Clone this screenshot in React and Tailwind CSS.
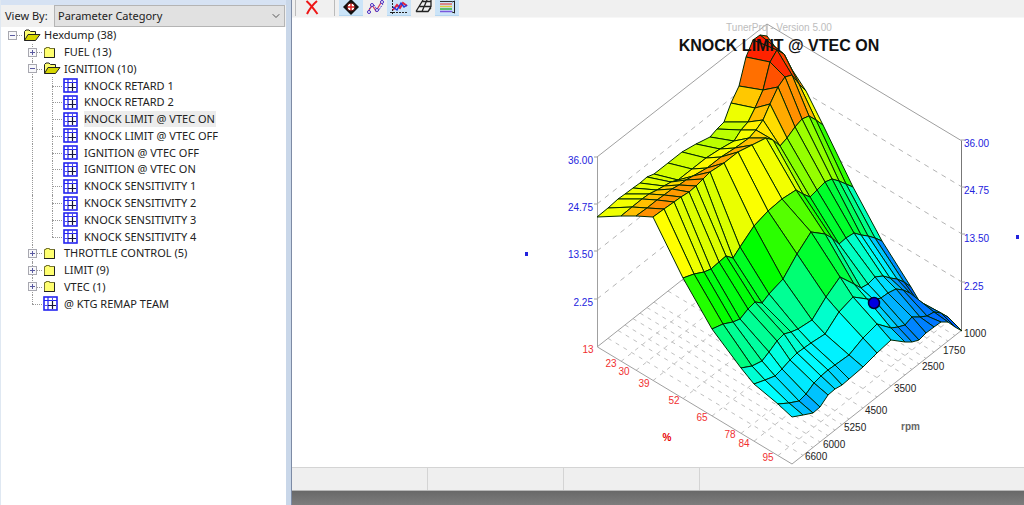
import React, { useState } from 'react';
import { ChevronDown } from 'lucide-react';

const tree = [
  { label: 'Hexdump (38)', level: 0, icon: 'open', expander: '-' },
  { label: 'FUEL (13)', level: 1, icon: 'folder', expander: '+' },
  { label: 'IGNITION (10)', level: 1, icon: 'open', expander: '-' },
  { label: 'KNOCK RETARD 1', level: 2, icon: 'table' },
  { label: 'KNOCK RETARD 2', level: 2, icon: 'table' },
  { label: 'KNOCK LIMIT @ VTEC ON', level: 2, icon: 'table' },
  { label: 'KNOCK LIMIT @ VTEC OFF', level: 2, icon: 'table' },
  { label: 'IGNITION @ VTEC OFF', level: 2, icon: 'table' },
  { label: 'IGNITION @ VTEC ON', level: 2, icon: 'table' },
  { label: 'KNOCK SENSITIVITY 1', level: 2, icon: 'table' },
  { label: 'KNOCK SENSITIVITY 2', level: 2, icon: 'table' },
  { label: 'KNOCK SENSITIVITY 3', level: 2, icon: 'table' },
  { label: 'KNOCK SENSITIVITY 4', level: 2, icon: 'table', last: true },
  { label: 'THROTTLE CONTROL (5)', level: 1, icon: 'folder', expander: '+' },
  { label: 'LIMIT (9)', level: 1, icon: 'folder', expander: '+' },
  { label: 'VTEC (1)', level: 1, icon: 'folder', expander: '+' },
  { label: '@ KTG REMAP TEAM', level: 1, icon: 'table', last: true },
];

// Distance along the rpm axis (7000 -> 1000), shared by every load line
const rpmSteps = [0, 11, 21, 28, 36, 43, 50, 57, 71, 85, 99, 113, 120, 127, 134, 142, 149, 156, 163, 170];

// One line per load breakpoint: x where it starts, then the height at each rpm step
const loadLines = [
  { x: 597, y: [217, 208, 199, 194, 188, 183, 177, 174, 163, 152, 144, 137, 129, 122, 103, 86, 57, 40, 35, 36] },
  { x: 621, y: [216, 207, 199, 194, 190, 186, 182, 180, 169, 158, 149, 141, 130, 122, 108, 90, 62, 50, 54, 68] },
  { x: 636, y: [216, 208, 200, 195, 189, 185, 180, 176, 168, 157, 148, 138, 130, 120, 104, 87, 77, 75, 84, 91] },
  { x: 653, y: [217, 209, 202, 197, 192, 186, 179, 172, 163, 152, 145, 138, 140, 146, 138, 127, 119, 116, 120, 125] },
  { x: 683, y: [278, 274, 272, 269, 262, 256, 258, 247, 226, 211, 199, 190, 194, 197, 190, 182, 179, 181, 184, 187] },
  { x: 712, y: [329, 324, 322, 319, 309, 302, 303, 294, 279, 254, 232, 234, 238, 244, 238, 233, 235, 236, 238, 241] },
  { x: 741, y: [368, 366, 361, 352, 341, 334, 332, 329, 320, 297, 277, 284, 288, 284, 277, 276, 278, 279, 282, 287] },
  { x: 754, y: [384, 380, 376, 369, 360, 353, 348, 343, 334, 312, 297, 299, 300, 298, 293, 289, 290, 293, 300, 309] },
  { x: 778, y: [404, 403, 401, 394, 383, 376, 370, 365, 355, 338, 324, 328, 327, 325, 317, 317, 316, 312, 313, 317] },
  { x: 792, y: [417, 415, 413, 407, 395, 389, 385, 379, 367, 353, 340, 342, 342, 340, 333, 327, 322, 322, 327, 331] },
];

const hueStops = [
  [-9, 224], [-3, 213], [-1, 206], [1, 192], [3, 182], [5, 171], [7, 158], [9, 148], [12, 130],
  [15.6, 110], [19, 90], [21.5, 75], [24.6, 59], [27, 41], [30, 27], [34, 8], [36, 0],
];

function floorY(x0, dx) {
  return 347 + ((x0 - 597) * 117) / 195 - (dx * 134) / 170;
}

function hueFor(value) {
  for (let i = 1; i < hueStops.length; i++) {
    const [v0, h0] = hueStops[i - 1];
    const [v1, h1] = hueStops[i];
    if (value <= v1) {
      const t = Math.max(0, (value - v0) / (v1 - v0));
      return Math.round(h0 + (h1 - h0) * t);
    }
  }
  return 0;
}

function buildCells() {
  const cells = [];
  // back to front so nearer cells cover the far ones
  for (let l = 0; l < loadLines.length - 1; l++) {
    for (let r = rpmSteps.length - 2; r >= 0; r--) {
      const corners = [[l, r], [l, r + 1], [l + 1, r + 1], [l + 1, r]].map(([a, b]) => ({
        x: loadLines[a].x + rpmSteps[b],
        y: loadLines[a].y[b],
        z: (floorY(loadLines[a].x, rpmSteps[b]) - loadLines[a].y[b]) / 4.27 - 8.6,
      }));
      const mean = corners.reduce((sum, c) => sum + c.z, 0) / 4;
      cells.push({
        key: `${l}-${r}`,
        points: corners.map((c) => `${c.x},${c.y}`).join(' '),
        fill: `hsl(${hueFor(mean)} 100% 50%)`,
      });
    }
  }
  return cells;
}

const cells = buildCells();

const valueLabels = [
  ['36.00', 157, 141],
  ['24.75', 204, 188],
  ['13.50', 251, 236],
  ['2.25', 299, 284],
];

const loadLabels = [
  ['13', 588, 353], ['23', 611, 367], ['30', 624, 375], ['39', 644, 387], ['52', 674, 404],
  ['65', 702, 421], ['78', 730, 438], ['84', 744, 447], ['95', 768, 461],
];

const rpmLabels = [
  ['1000', 964, 337], ['1750', 943, 354], ['2500', 922, 370], ['3500', 894, 392],
  ['4500', 865, 414], ['5250', 844, 431], ['6000', 823, 448], ['6600', 805, 460],
];

function TreeIcon({ type }) {
  if (type === 'table') {
    return (
      <svg width="15" height="15" viewBox="0 0 15 15" aria-hidden="true">
        <rect x="1" y="1" width="13" height="13" fill="#fff" stroke="#2424f0" strokeWidth="1.600" />
        <path d="M5 1v13M1 4.500h13" stroke="#2424f0" strokeWidth="1.200" />
        <path d="M9.500 1v4M1 9.500h4" stroke="#4c4cf0" />
        <path d="M9.500 5v8M5 9.500h8" stroke="#14143c" strokeWidth="1.200" />
      </svg>
    );
  }
  if (type === 'open') {
    return (
      <svg width="18" height="13" viewBox="0 0 18 13" aria-hidden="true">
        <path d="M1.500 11.500V2.500L3 1h3l1.500 1.500h5v3" fill="#ffff70" stroke="#222" />
        <path d="M1.500 11.500L5 5.500h12l-4.500 6z" fill="#d6d600" stroke="#222" />
      </svg>
    );
  }
  return (
    <svg width="13" height="13" viewBox="0 0 13 13" aria-hidden="true">
      <path d="M1.500 11.500v-9h1.500v-1h3.500v1h5v9z" fill="#ffff70" stroke="#77762c" />
      <path d="M1 11.500h10.500v-9" fill="none" stroke="#222" />
    </svg>
  );
}

function TreeRow({ item, selected, onSelect }) {
  const branch = item.level > 0;
  return (
    <li role="treeitem" aria-selected={selected} className="flex items-center pl-px">
      {item.level > 0 && <span className="w-5" />}
      {item.level > 1 && (
        <span className="w-5 self-stretch flex justify-center">
          <span className="border-l border-dotted border-[#999]" />
        </span>
      )}
      <span className="relative w-5 self-stretch flex items-center justify-center">
        {branch && (
          <span
            className={`absolute left-[10px] top-0 border-l border-dotted border-[#999] ${item.last ? 'bottom-1/2' : 'bottom-0'}`}
          />
        )}
        <span className="absolute left-[10px] right-0 top-1/2 border-t border-dotted border-[#999]" />
        {item.expander && (
          <button
            type="button"
            aria-label={item.expander === '+' ? 'Expand' : 'Collapse'}
            className="relative size-[9px] bg-[#f8f8fa] border border-[#a8a8b0] flex items-center justify-center"
          >
            <svg width="5" height="5" viewBox="0 0 5 5" aria-hidden="true">
              <path d={item.expander === '+' ? 'M0 2.500h5M2.500 0v5' : 'M0 2.500h5'} stroke="#5a5aa0" />
            </svg>
          </button>
        )}
      </span>
      <span className="w-[22px] flex items-center pl-px">
        <TreeIcon type={item.icon} />
      </span>
      <button
        type="button"
        onClick={onSelect}
        className={`h-4 leading-4 pr-px whitespace-nowrap ${selected ? 'bg-[#ececec]' : ''}`}
      >
        {item.label}
      </button>
    </li>
  );
}

function ToolButton({ label, active, children }) {
  return (
    <button
      type="button"
      aria-label={label}
      className={`w-6 h-4 flex items-start justify-center ${active ? 'bg-[#cbe4f8] border-b border-[#b5d6f0]' : ''}`}
    >
      {children}
    </button>
  );
}

function Toolbar() {
  return (
    <div className="flex items-start h-[18px] bg-[#f0f0f0] border-b border-[#f7f7f7]">
      <span className="ml-[3px] w-px h-4 bg-[#bbb]" />
      <div className="ml-1 flex">
        <ToolButton label="Close">
          <svg width="16" height="15" viewBox="0 0 16 15" aria-hidden="true">
            <path d="M2.500 1Q7 5 13.500 14M13 1Q7 6 3 14" fill="none" stroke="#ee1616" strokeWidth="2" />
          </svg>
        </ToolButton>
      </div>
      <span className="ml-[10px] w-px h-4 bg-[#bbb]" />
      <div className="ml-1 flex">
        <ToolButton label="Move" active>
          <svg width="16" height="15" viewBox="0 0 16 15" aria-hidden="true">
            <path d="M8-1l8 8-8 8-8-8z" fill="#111" />
            <circle cx="8" cy="7" r="3.500" fill="#fff" />
            <path d="M8 3.500v7M4.500 7h7" stroke="#dc2020" strokeWidth="1.500" />
            <circle cx="8" cy="7" r="4" fill="none" stroke="#5a1414" />
          </svg>
        </ToolButton>
        <ToolButton label="Trace points">
          <svg width="19" height="15" viewBox="0 0 19 15" aria-hidden="true">
            <path d="M2 12l4-7 4 6 6-10" fill="none" stroke="#d04060" strokeWidth="1.300" />
            <path d="M3 9l5-4 4 6 5-7" fill="none" stroke="#5038c8" strokeDasharray="2 1" />
            <g fill="#fff" stroke="#4428c0">
              <circle cx="3" cy="12" r="1.500" />
              <circle cx="6" cy="5" r="1.500" />
              <circle cx="11" cy="10" r="1.500" />
              <circle cx="16" cy="2" r="1.500" />
            </g>
          </svg>
        </ToolButton>
        <ToolButton label="2D graph" active>
          <svg width="18" height="15" viewBox="0 0 18 15" aria-hidden="true">
            <path d="M2.500 0v14M0 12.500h18" stroke="#222" strokeDasharray="2 1" />
            <path d="M3 10l4-5 3 3 3-5 4 3" fill="none" stroke="#e02040" strokeWidth="2" />
            <path d="M3 7l4 3 4-7 3 4 3-2" fill="none" stroke="#2438dc" strokeWidth="1.500" />
          </svg>
        </ToolButton>
        <ToolButton label="3D mesh">
          <svg width="17" height="15" viewBox="0 0 17 15" aria-hidden="true">
            <path d="M1 11.500h12l3-4M4 6.500h12M7 1.500h9M1 11.500L8 0M7 11.500L12 0M13 11.500L16 6.500V0" fill="none" stroke="#222" strokeWidth="1.300" />
          </svg>
        </ToolButton>
        <ToolButton label="Color levels" active>
          <svg width="17" height="15" viewBox="0 0 17 15" aria-hidden="true">
            <path d="M1 1.500h12" stroke="#333" />
            <path d="M1 4h12" stroke="#e06868" strokeWidth="1.500" />
            <path d="M1 6.500h12" stroke="#e0cc40" strokeWidth="1.500" />
            <path d="M1 9h12" stroke="#34b044" strokeWidth="1.500" />
            <path d="M1 11.500h12" stroke="#7858dc" strokeWidth="1.500" />
            <path d="M15.500 1v12M13 2l3-1M13 12l3 1" stroke="#222" />
          </svg>
        </ToolButton>
      </div>
    </div>
  );
}

function SurfaceChart() {
  return (
    <svg
      viewBox="292 18 732 449"
      className="block w-full h-auto bg-white font-['Liberation_Sans',Arial,sans-serif] text-[10px]"
      role="img"
      aria-label="Knock limit surface by load and rpm"
    >
      {/* Floor grid */}
      <g stroke="#c0c0c0" strokeDasharray="4 5">
        {loadLines.slice(1, -1).map((l) => (
          <line key={l.x} x1={l.x} y1={floorY(l.x, 0)} x2={l.x + 170} y2={floorY(l.x, 170)} />
        ))}
        {rpmSteps.slice(1, -1).map((dx) => (
          <line key={dx} x1={597 + dx} y1={floorY(597, dx)} x2={792 + dx} y2={floorY(792, dx)} />
        ))}
      </g>

      {/* Wall levels */}
      <g fill="none" stroke="#b4b4b4" strokeDasharray="5 5">
        {valueLabels.slice(1).map(([text, y]) => (
          <path key={text} d={`M597 ${y}L767 ${y - 134}L962 ${y - 17}`} />
        ))}
      </g>

      {/* Box */}
      <g fill="none" stroke="#a0a0a0">
        <path d="M597.500 157V347L792 464L962 330" />
        <path d="M597 347L767 213V24" />
        <path d="M597 157L767 24L962 141" />
        <path d="M961.500 141V330" stroke="#777" />
        {valueLabels.map(([text, y]) => (
          <path key={text} d={`M594 ${y}h4M961 ${y - 17}h4`} />
        ))}
      </g>

      {/* Surface */}
      <g stroke="#002800" strokeWidth="1" strokeLinejoin="round">
        {cells.map((c) => (
          <polygon key={c.key} points={c.points} fill={c.fill} />
        ))}
      </g>
      <circle cx="874" cy="303" r="5.500" fill="#0000e0" stroke="#000030" strokeWidth="1.500" />

      {/* Axis labels */}
      <g fill="#2222dd">
        {valueLabels.map(([text, left, right]) => (
          <React.Fragment key={text}>
            <text x="593" y={left + 7} textAnchor="end">{text}</text>
            <text x="964" y={right + 6}>{text}</text>
          </React.Fragment>
        ))}
        <rect x="525" y="252" width="3" height="4" />
        <rect x="1016" y="235" width="3" height="4" />
      </g>
      <g fill="#f03030" textAnchor="middle">
        {loadLabels.map(([text, x, y]) => (
          <text key={text} x={x} y={y}>{text}</text>
        ))}
        <text x="667" y="441" fill="#e80000" className="font-bold">%</text>
      </g>
      <g fill="#222">
        {rpmLabels.map(([text, x, y]) => (
          <text key={text} x={x} y={y}>{text}</text>
        ))}
        <text x="901" y="430" fill="#666" className="font-bold">rpm</text>
      </g>
      <text x="779" y="31" textAnchor="middle" fill="#bdbdbd">TunerPro - Version 5.00</text>
      <text x="779" y="51" textAnchor="middle" fill="#111" className="text-[16px] font-bold">
        KNOCK LIMIT @ VTEC ON
      </text>
    </svg>
  );
}

export default function App() {
  const [selected, setSelected] = useState('KNOCK LIMIT @ VTEC ON');

  return (
    <div className="min-h-screen flex bg-white text-[11px] text-[#222] font-['Noto_Sans',sans-serif]">
      {/* Parameter tree */}
      <aside className="w-[286px] shrink-0 border-l border-[#dfe8f2]">
        <div className="h-[5px] bg-[#d6e2f3]" />
        <div className="flex h-[22px] bg-[#f0f0f0] pr-px">
          <label htmlFor="view-by" className="w-[53px] pl-1 leading-[21px] whitespace-nowrap">View By:</label>
          <div className="relative flex-1">
            <select
              id="view-by"
              className="w-full h-[22px] appearance-none bg-[#e1e1e1] border border-[#b4b4b4] pl-[3px] leading-5"
            >
              <option>Parameter Category</option>
            </select>
            <ChevronDown size={12} className="absolute right-[3px] top-[5px] text-[#555] pointer-events-none" />
          </div>
        </div>
        <ul role="tree" className="grid auto-rows-fr h-[285px]">
          {tree.map((item) => (
            <TreeRow
              key={item.label}
              item={item}
              selected={item.label === selected}
              onSelect={() => setSelected(item.label)}
            />
          ))}
        </ul>
      </aside>
      <div className="w-[6px] shrink-0 bg-[#c9d7e9] border-r border-[#7d8ba5]" />

      {/* Graph window */}
      <main className="flex-1 min-w-0 flex flex-col bg-[#757575]">
        <Toolbar />
        <SurfaceChart />
        <footer className="flex h-6 bg-[#efefef] border-t border-[#d4d4d4] border-b border-b-[#b8b8b8]">
          <span className="w-[136px] border-r border-[#d4d4d4]" />
          <span className="w-[136px] border-r border-[#d4d4d4]" />
          <span className="w-[136px] border-r border-[#d4d4d4]" />
        </footer>
        <div className="flex-1 min-h-[14px] bg-gradient-to-b from-[#686868] to-[#7d7d7d]" />
      </main>
    </div>
  );
}
